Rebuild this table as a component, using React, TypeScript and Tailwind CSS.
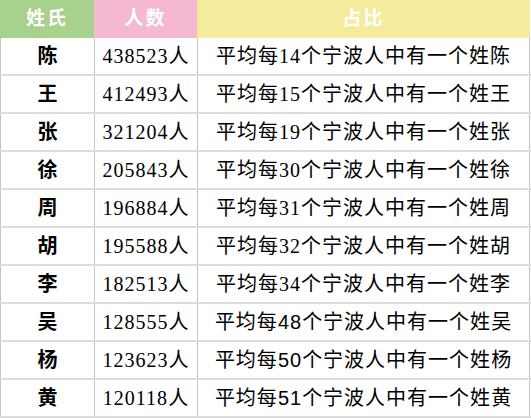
import React from "react";

const rows: [string, string, string][] = [
  ["陈", "438523", "14"],
  ["王", "412493", "15"],
  ["张", "321204", "19"],
  ["徐", "205843", "30"],
  ["周", "196884", "31"],
  ["胡", "195588", "32"],
  ["李", "182513", "34"],
  ["吴", "128555", "48"],
  ["杨", "123623", "50"],
  ["黄", "120118", "51"],
];

const serif = { fontFamily: '"Liberation Serif", "Noto Sans CJK SC", serif' };
const sans = { fontFamily: '"Liberation Sans", "Noto Sans CJK SC", sans-serif' };

export default function App() {
  return (
    <div className="w-[531px] h-[420px] bg-white" style={serif}>
      <div className="grid grid-cols-[94px_103px_333px] h-[38px] text-white font-bold text-[19px] tracking-[2px]">
        <div className="bg-[#a9d18e] flex items-center justify-center">姓氏</div>
        <div className="bg-[#f4b9d0] flex items-center justify-center">人数</div>
        <div className="bg-[#f4ec9c] flex items-center justify-center">占比</div>
      </div>
      {rows.map(([name, num, ratio], i) => (
        <div
          key={name}
          className="grid grid-cols-[94px_103px_333px] h-[38px] border-b-2 border-[#dcdcdc] text-black text-[20px]"
        >
          <div className="border-l border-[#c4c4c4] flex items-center justify-center font-bold">
            {name}
          </div>
          <div className="border-l border-[#c4c4c4] flex items-center justify-center tracking-[1px]">
            {num}人
          </div>
          <div className="border-l border-r border-[#c4c4c4] flex items-center justify-center tracking-[1px]">
            平均每<span style={i < 7 ? serif : sans}>{ratio}</span>个宁波人中有一个姓{name}
          </div>
        </div>
      ))}
    </div>
  );
}
